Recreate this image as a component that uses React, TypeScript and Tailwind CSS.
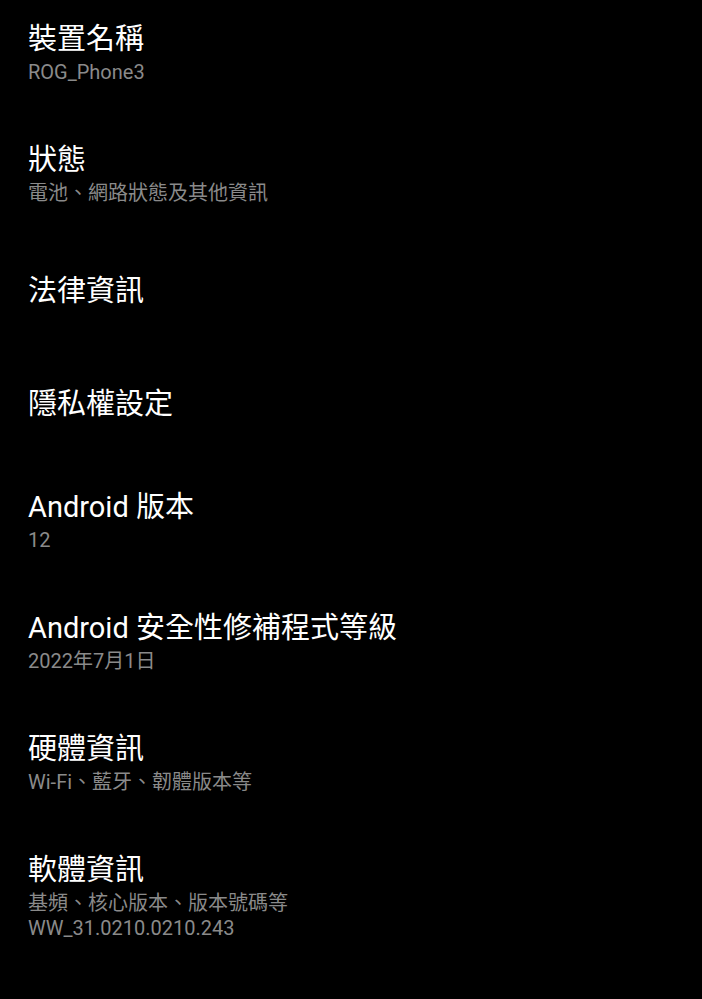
import React from 'react';

interface Pref {
  title: string;
  summary?: string[];
}

const prefs: Pref[] = [
  { title: '裝置名稱', summary: ['ROG_Phone3'] },
  { title: '狀態', summary: ['電池、網路狀態及其他資訊'] },
  { title: '法律資訊' },
  { title: '隱私權設定' },
  { title: 'Android 版本', summary: ['12'] },
  { title: 'Android 安全性修補程式等級', summary: ['2022年7月1日'] },
  { title: '硬體資訊', summary: ['Wi-Fi、藍牙、韌體版本等'] },
  { title: '軟體資訊', summary: ['基頻、核心版本、版本號碼等', 'WW_31.0210.0210.243'] },
];

const font = "font-['Roboto','Noto_Sans_CJK_TC',sans-serif]";

const PrefRow: React.FC<{ pref: Pref }> = ({ pref }) => {
  if (!pref.summary) {
    return (
      <div className="min-h-[113px] flex items-center px-[28px]">
        <span className="text-[29px] leading-[42px] text-white">{pref.title}</span>
      </div>
    );
  }
  return (
    <div className="px-[28px] pt-[26px] pb-[28px] flex flex-col">
      <span className="text-[29px] leading-[42px] text-white">{pref.title}</span>
      {pref.summary.map((line) => (
        <span key={line} className="text-[20px] leading-[25px] text-[#8a8a8a]">
          {line}
        </span>
      ))}
    </div>
  );
};

const App: React.FC = () => {
  return (
    <div className={`min-h-[999px] h-[999px] overflow-hidden bg-black ${font}`}>
      <div className="-mt-[8px] flex flex-col">
        {prefs.map((p) => (
          <PrefRow key={p.title} pref={p} />
        ))}
      </div>
    </div>
  );
};

export default App;
